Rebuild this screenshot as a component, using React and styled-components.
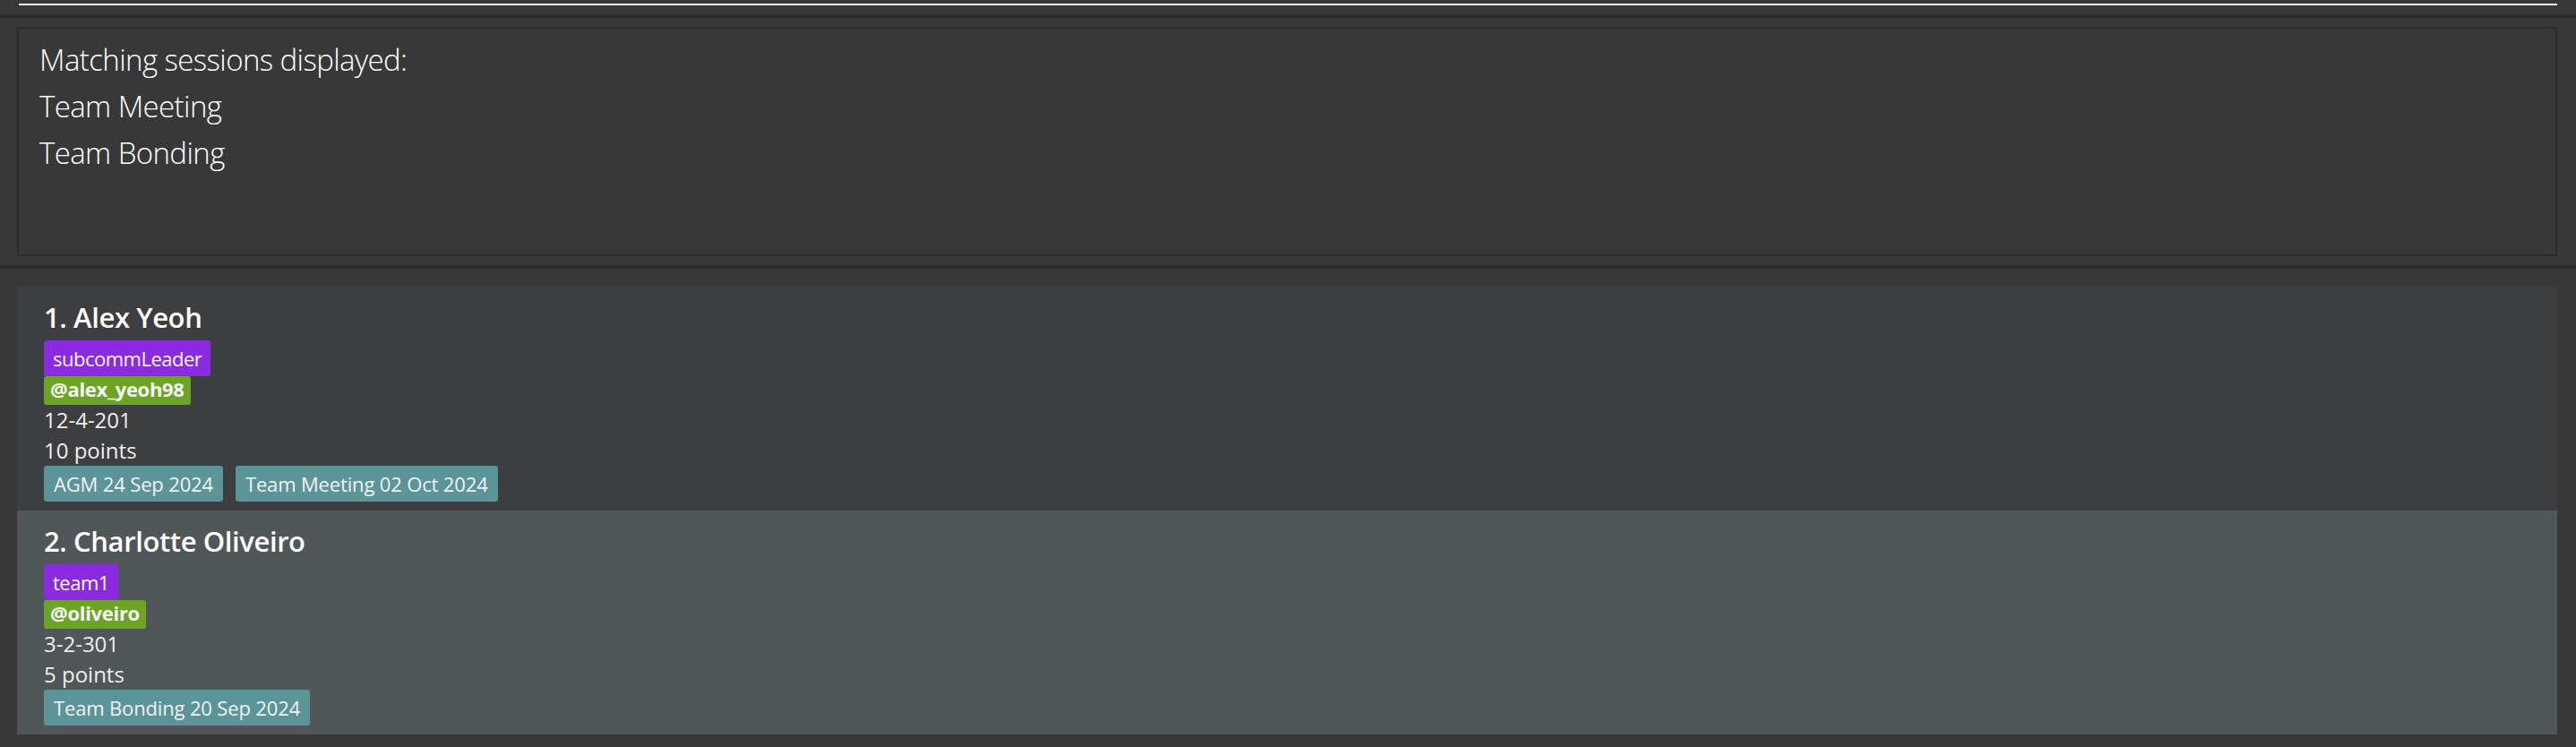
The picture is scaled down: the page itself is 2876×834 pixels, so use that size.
import React from "react";
import styled, { createGlobalStyle } from "styled-components";

const persons = [
  {
    id: 1,
    name: "Alex Yeoh",
    roles: ["subcommLeader"],
    handle: "@alex_yeoh98",
    room: "12-4-201",
    points: 10,
    sessions: ["AGM 24 Sep 2024", "Team Meeting 02 Oct 2024"],
  },
  {
    id: 2,
    name: "Charlotte Oliveiro",
    roles: ["team1"],
    handle: "@oliveiro",
    room: "3-2-301",
    points: 5,
    sessions: ["Team Bonding 20 Sep 2024"],
  },
];

const feedback = ["Matching sessions displayed:", "Team Meeting", "Team Bonding"];

const GlobalStyle = createGlobalStyle`
  html, body {
    margin: 0;
    padding: 0;
    background: #383838;
  }
  body {
    font-family: "Open Sans", "Noto Sans", sans-serif;
    color: #ffffff;
  }
`;

const App = () => {
  return (
    <Window>
      <GlobalStyle />
      {/* command box, only its bottom edge shows */}
      <CommandBar>
        <CommandField />
      </CommandBar>
      <Divider />
      {/* result display */}
      <ResultPane>
        <ResultBox>
          {feedback.map((line) => (
            <ResultLine key={line}>{line}</ResultLine>
          ))}
        </ResultBox>
      </ResultPane>
      <Divider />
      {/* person list */}
      <ListPane>
        {persons.map((p, i) => (
          <Card key={p.id} odd={i % 2 === 1}>
            <Name>
              {i + 1}. {p.name}
            </Name>
            <TagRow>
              {p.roles.map((r) => (
                <RoleTag key={r}>{r}</RoleTag>
              ))}
            </TagRow>
            <TagRow>
              <HandleTag>{p.handle}</HandleTag>
            </TagRow>
            <Detail>{p.room}</Detail>
            <Detail>{p.points} points</Detail>
            <TagRow gap={14}>
              {p.sessions.map((s) => (
                <SessionTag key={s}>{s}</SessionTag>
              ))}
            </TagRow>
          </Card>
        ))}
      </ListPane>
    </Window>
  );
};

const Window = styled.div`
  width: 100%;
  min-height: 834px;
  background: #383838;
  display: flex;
  flex-direction: column;
`;

const CommandBar = styled.div`
  height: 16px;
  box-sizing: border-box;
  padding: 0 21px 0 21px;
`;

const CommandField = styled.div`
  height: 4px;
  border-bottom: 2px solid #ffffff;
`;

const Divider = styled.div`
  height: 4px;
  background: #2b2b2b;
`;

const ResultPane = styled.div`
  padding: 10px 21px 10px 19px;
`;

const ResultBox = styled.div`
  height: 256px;
  box-sizing: border-box;
  border: 2px solid #2b2b2b;
  background: #383838;
  padding: 9px 23px 0 23px;
`;

const ResultLine = styled.div`
  font-weight: 300;
  font-size: 33px;
  line-height: 52px;
  letter-spacing: -0.6px;
  color: #ffffff;
`;

const ListPane = styled.div`
  flex: 1;
  padding: 20px 21px 0 19px;
`;

const Card = styled.div`
  background: ${(p) => (p.odd ? "#515658" : "#3c3e3f")};
  padding: 10px 30px 10px 30px;
`;

const Name = styled.div`
  font-weight: 600;
  font-size: 31px;
  line-height: 48px;
  letter-spacing: -0.4px;
  color: #ffffff;
  margin-bottom: 2px;
`;

const TagRow = styled.div`
  display: flex;
  gap: ${(p) => p.gap || 0}px;
`;

const RoleTag = styled.span`
  background: #8a2be2;
  color: #f4f4f4;
  font-size: 22px;
  line-height: 40px;
  height: 40px;
  padding: 0 10px;
  border-radius: 3px;
  letter-spacing: -0.5px;
`;

const HandleTag = styled.span`
  background: #6ea426;
  color: #f4f4f4;
  font-weight: 700;
  font-size: 22px;
  line-height: 29px;
  height: 32px;
  box-sizing: border-box;
  padding: 0 7px 3px 7px;
  border-radius: 3px;
  letter-spacing: -0.3px;
`;

const Detail = styled.div`
  font-size: 24px;
  line-height: 34px;
  color: #eeeeee;
`;

const SessionTag = styled.span`
  background: #5b9597;
  color: #f2f2f2;
  font-size: 22px;
  line-height: 40px;
  height: 40px;
  padding: 0 11px;
  border-radius: 3px;
  letter-spacing: -0.15px;
`;

export default App;
